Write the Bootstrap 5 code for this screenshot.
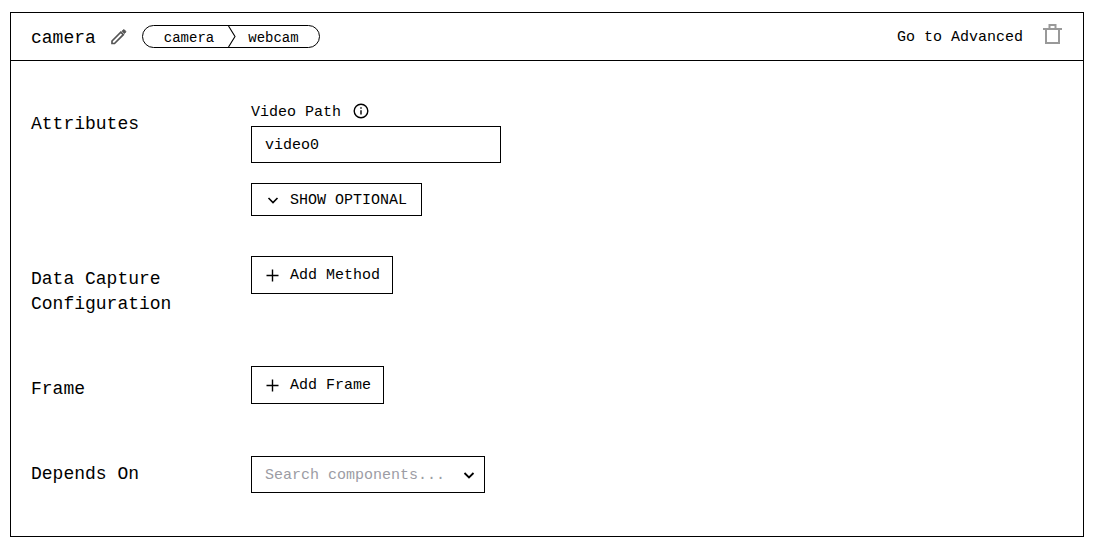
<!DOCTYPE html>
<html lang="en">
<head>
<meta charset="utf-8">
<meta name="viewport" content="width=device-width, initial-scale=1">
<title>camera</title>
<link rel="stylesheet" href="https://cdn.jsdelivr.net/npm/bootstrap@5.3.0/dist/css/bootstrap.min.css">
<style>
  body { font-family: "Liberation Mono", monospace; font-size: 15px; line-height: 24px; color: #000; background: #fff; padding: 12px 12px 10px 10px; }
  svg { display: block; flex: none; }
  .component-panel { --bs-card-border-color: #000; --bs-card-border-radius: 0; --bs-card-color: #000; --bs-card-bg: #fff; }
  .panel-head { min-height: 48px; padding: 0 20px; border-bottom: 1px solid #000; }
  .panel-title { font-size: 18px; line-height: 24px; font-weight: 400; padding-top: 2px; }
  .plain-btn { padding: 0; border: 0; background: none; color: #000; }
  .edit-btn { color: #555; margin-left: 15px; }
  .advanced-btn { padding-top: 2px; }
  .trash-btn { color: #999; margin: 0 0 5px 19px; }
  .crumb-pill { height: 23px; margin-left: 15px; padding: 4px 20px 0 21px; border: 1px solid #000; border-radius: 12px; font-size: 14px; line-height: 17px; }
  .crumb-pill svg { margin: -4px 11px 0 13px; }
  .panel-body { padding: 40px 20px; display: grid; gap: 40px; }
  .setting { display: grid; grid-template-columns: 220px minmax(0, 1fr); align-items: start; }
  .setting-name { margin: 0; padding: 11px 40px 9px 0; font-size: 18px; line-height: 25px; font-weight: 400; }
  .field-label { line-height: 23px; padding-bottom: 2px; }
  .box-btn, .box-input { border: 1px solid #000; border-radius: 0; background: #fff; color: #000; font-size: 15px; line-height: 24px; }
  .box-btn { display: flex; align-items: center; height: 38px; padding: 2px 12px 0 13px; gap: 9px; }
  .box-btn.compact { height: 33px; margin-top: 20px; padding-right: 14px; }
  .box-btn:hover { background: #f4f4f4; }
  .box-input { height: 37px; padding: 2px 13px 0; }
  .path-input { width: 250px; max-width: 100%; }
  .search-box { width: 234px; max-width: 100%; border: 1px solid #000; margin-top: 5px; padding-right: 7px; }
  .search-box .box-input { border: 0; height: 35px; padding-right: 0; min-width: 0; }
  .search-box .box-input::placeholder { color: #9c9ca4; opacity: 1; }
  @media (max-width: 600px) { .setting { grid-template-columns: minmax(0, 1fr); } }
</style>
</head>
<body>
<main class="card component-panel">
  <header class="panel-head d-flex align-items-center">
    <h1 class="panel-title mb-0">camera</h1>
    <button type="button" class="plain-btn edit-btn" aria-label="Edit name">
      <svg width="16" height="16" viewBox="0 0 16 16" fill="none" stroke="currentColor" stroke-width="1.7"><path d="M1 14.500v-2.500L9.800 3.200l2.500 2.500L3.500 14.500z"/><path d="M10.800 2.200l1.400-1.400q.6-.5 1.200 0l1.300 1.300q.5.6 0 1.200l-1.400 1.400z" fill="currentColor" stroke-width=".6"/></svg>
    </button>
    <div class="crumb-pill d-flex align-items-center">
      <span>camera</span>
      <svg width="10" height="21" viewBox="0 0 10 21" fill="none" stroke="#000" stroke-width="1.1"><path d="M1.500 0L8 10.500 1.500 21"/></svg>
      <span>webcam</span>
    </div>
    <button type="button" class="plain-btn advanced-btn ms-auto">Go to Advanced</button>
    <button type="button" class="plain-btn trash-btn" aria-label="Delete component">
      <svg width="21" height="20" viewBox="0 0 21 20" fill="none" stroke="currentColor" stroke-width="2"><path d="M1 5h19M4 5v14h13V5M7.500 4V1h6v3"/></svg>
    </button>
  </header>
  <div class="panel-body">
    <section class="setting">
      <h2 class="setting-name">Attributes</h2>
      <div>
        <div class="field-label d-flex align-items-center">
          <label for="videoPath">Video Path</label>
          <svg class="ms-2 mb-1" width="24" height="18" viewBox="0 0 24 18" fill="none" stroke="#000" stroke-width="1.4"><circle cx="12" cy="9" r="6.800"/><path d="M12 8.300v4.200M12 5.300v1.500"/></svg>
        </div>
        <input id="videoPath" class="box-input path-input d-block" type="text" value="video0">
        <button type="button" class="box-btn compact">
          <svg width="16" height="16" viewBox="0 0 16 16" fill="none" stroke="#000" stroke-width="1.600"><path d="M3.500 5L8 9.500 12.500 5"/></svg>
          SHOW OPTIONAL
        </button>
      </div>
    </section>
    <section class="setting">
      <h2 class="setting-name">Data Capture Configuration</h2>
      <div>
        <button type="button" class="box-btn">
          <svg width="16" height="16" viewBox="0 0 16 16" fill="none" stroke="#000" stroke-width="1.400"><path d="M7.500 1.500v12M1.500 7.500h12"/></svg>
          Add Method
        </button>
      </div>
    </section>
    <section class="setting">
      <h2 class="setting-name">Frame</h2>
      <div>
        <button type="button" class="box-btn">
          <svg width="16" height="16" viewBox="0 0 16 16" fill="none" stroke="#000" stroke-width="1.400"><path d="M7.500 1.500v12M1.500 7.500h12"/></svg>
          Add Frame
        </button>
      </div>
    </section>
    <section class="setting">
      <h2 class="setting-name"><label for="dependsOn">Depends On</label></h2>
      <div class="search-box d-flex align-items-center">
        <input id="dependsOn" class="box-input flex-grow-1" type="text" role="combobox" aria-expanded="false" placeholder="Search components...">
        <svg width="16" height="16" viewBox="0 0 16 16" fill="none" stroke="#000" stroke-width="1.800"><path d="M3.500 6L8 10.500 12.500 6"/></svg>
      </div>
    </section>
  </div>
</main>
<script src="https://cdn.jsdelivr.net/npm/bootstrap@5.3.0/dist/js/bootstrap.bundle.min.js"></script>
</body>
</html>
